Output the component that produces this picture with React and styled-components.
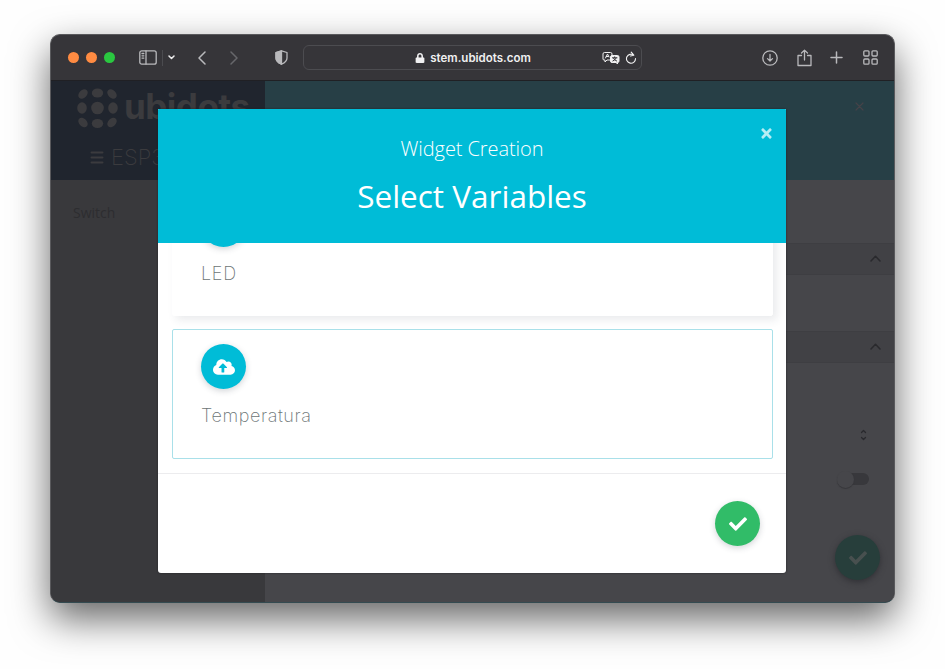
import React from "react";
import styled, { createGlobalStyle } from "styled-components";
import { FaCheck, FaTimes, FaCloudUploadAlt, FaLock } from "react-icons/fa";

const GlobalStyle = createGlobalStyle`
  * { box-sizing: border-box; }
  body { margin: 0; background: #fefefe; font-family: "Open Sans", sans-serif; overflow: hidden; }
  svg { display: block; flex: none; }
`;

const Desktop = styled.div`
  height: 669px;
  padding: 34px 50px 0;
`;

const Browser = styled.main`
  width: 845px;
  height: 569px;
  display: flex;
  flex-direction: column;
  border: 1px solid #59595c;
  border-bottom-color: #344b51;
  border-radius: 10px;
  overflow: hidden;
  background: #363539;
  box-shadow: 0 16px 38px rgba(0, 0, 0, 0.6);
`;

const Toolbar = styled.header`
  height: 46px;
  flex: none;
  display: grid;
  grid-template-columns: 252px 339px 1fr;
  align-items: center;
  border-bottom: 1px solid #202024;
  color: #b9b9bc;
`;

const ToolGroup = styled.div`
  display: flex;
  align-items: center;
`;

const Lights = styled.div`
  display: flex;
  gap: 7px;
  margin-left: 17px;
`;

const Light = styled.span`
  width: 11px;
  height: 11px;
  border-radius: 50%;
  background: ${(p) => p.$color};
`;

const Tool = styled.span`
  margin-left: ${(p) => p.$gap}px;
  color: ${(p) => p.$color || "inherit"};
`;

const Divider = styled.span`
  width: 1px;
  height: 16px;
  margin-left: 5px;
  background: #4b4b4f;
`;

const AddressBar = styled.div`
  height: 25px;
  display: grid;
  grid-template-columns: 1fr auto 1fr;
  align-items: center;
  border: 1px solid #4c4c50;
  border-radius: 6px;
  color: #f0f0f1;
`;

const Address = styled.div`
  grid-column: 2;
  display: flex;
  align-items: center;
  gap: 5px;
  padding: 1px 0 0 1px;
  font: 600 11.5px/16px Inter, sans-serif;
`;

const AddressTools = styled.div`
  display: flex;
  justify-content: flex-end;
  align-items: center;
  gap: 5px;
  padding-right: 4px;
`;

const Page = styled.div`
  position: relative;
  flex: 1;
  display: grid;
  grid-template-columns: 214px 1fr;
`;

const Sidebar = styled.aside`
  background: #39393c;
`;

const SidebarHead = styled.div`
  height: 99px;
  padding: 7px 0 0 26px;
  background: #20252e;
  color: #3b3b3e;
`;

const Brand = styled.div`
  height: 42px;
  display: flex;
  align-items: flex-start;
  gap: 6px;
  font: 700 35px/36px Inter, sans-serif;
  letter-spacing: -0.5px;
`;

const DeviceTitle = styled.div`
  display: flex;
  align-items: center;
  gap: 7px;
  margin: 14px 0 0 13px;
  font: 200 22px/27px Inter, sans-serif;
`;

const WidgetName = styled.div`
  padding: 23px 0 0 22px;
  font: 400 14px/20px "Open Sans", sans-serif;
  color: #2d2d30;
`;

const Panel = styled.section`
  display: flex;
  flex-direction: column;
  background: #46464a;
  color: #29292d;
`;

const PanelHead = styled.div`
  height: 99px;
  flex: none;
  display: flex;
  justify-content: flex-end;
  padding: 21px 30px 0 0;
  background: #273f46;
  color: #454248;
`;

const Section = styled.div`
  height: 32px;
  flex: none;
  display: flex;
  align-items: center;
  justify-content: flex-end;
  margin-top: ${(p) => p.$top}px;
  padding: 0 13px 2px 0;
  border: 1px solid #3e3e42;
  border-right: 0;
  background: #414145;
`;

const FieldEnd = styled.div`
  display: flex;
  justify-content: flex-end;
  margin-top: ${(p) => p.$top}px;
  padding-right: ${(p) => p.$right}px;
`;

const SwitchTrack = styled.span`
  width: 32px;
  height: 16px;
  display: flex;
  align-items: center;
`;

const SwitchKnob = styled.span`
  width: 17px;
  height: 17px;
  flex: none;
  border-radius: 50%;
  background: #46464a;
  box-shadow: 0 1px 1px #36363a;
  z-index: 1;
`;

const SwitchBar = styled.span`
  width: 24px;
  height: 12px;
  margin-left: -9px;
  border-radius: 6px;
  background: #38383c;
`;

const RoundButton = styled.button`
  width: 45px;
  height: 45px;
  display: flex;
  flex: none;
  align-items: center;
  justify-content: center;
  padding: 0;
  border: 0;
  border-radius: 50%;
  background: ${(p) => p.$bg};
  color: ${(p) => p.$fg || "#fff"};
  box-shadow: 0 2px 6px ${(p) => p.$shadow || "rgba(50, 60, 75, 0.22)"};
`;

const Overlay = styled.div`
  position: absolute;
  inset: 0;
  z-index: 2;
  padding: 28px 0 0 107px;
`;

const Dialog = styled.section`
  width: 628px;
  height: 464px;
  display: flex;
  flex-direction: column;
  border-radius: 1px 1px 3px 3px;
  overflow: hidden;
  background: #fff;
  box-shadow: 0 0 2px #202024;
`;

const DialogHead = styled.header`
  height: 134px;
  flex: none;
  display: grid;
  grid-template-columns: 40px 1fr 40px;
  background: #00bcd7;
  color: #fff;
  text-align: center;
`;

const Titles = styled.div`
  grid-column: 2;
  padding-top: 26px;
`;

const Kicker = styled.div`
  font: 300 20px/28px "Open Sans", sans-serif;
  letter-spacing: -0.08px;
`;

const Heading = styled.h1`
  margin: 11px 0 0;
  font: 400 31.5px/44px "Open Sans", sans-serif;
`;

const Close = styled.div`
  padding: 17px 0 0 13px;
  color: #b5edf4;
`;

const VariableList = styled.div`
  height: 231px;
  flex: none;
  display: flex;
  flex-direction: column;
  justify-content: flex-end;
  gap: 13px;
  padding: 0 13px 14px 14px;
  overflow: hidden;
  border-bottom: 1px solid #ececee;
`;

const VariableCard = styled.article`
  height: 130px;
  flex: none;
  padding: ${(p) => (p.$selected ? 14 : 15)}px 28px;
  background: #fff;
  border: 1px solid ${(p) => (p.$selected ? "#a9e0e9" : "#fff")};
  border-radius: 2px;
  box-shadow: ${(p) => (p.$selected ? "none" : "4px 4px 9px rgba(50, 60, 75, 0.1)")};
`;

const VariableName = styled.div`
  margin-top: 15px;
  font: 200 18px/24px Inter, sans-serif;
  letter-spacing: ${(p) => p.$tracking}px;
  color: #6c7476;
`;

const DialogFoot = styled.footer`
  flex: 1;
  display: flex;
  justify-content: flex-end;
  padding: 27px 26px 0 0;
`;

const LineIcon = ({ w, h = w, stroke = 1.3, children }) => (
  <svg width={w} height={h} viewBox={`0 0 ${w} ${h}`} fill="none" stroke="currentColor" strokeWidth={stroke} strokeLinecap="round" strokeLinejoin="round">
    {children}
  </svg>
);

const LogoMark = () => (
  <svg width="41" height="41" viewBox="0 0 41 41" fill="currentColor">
    <ellipse cx="6" cy="6" rx="5.4" ry="3.9" transform="rotate(-45 6 6)" />
    <ellipse cx="20.5" cy="5" rx="5.7" ry="4.6" />
    <ellipse cx="35" cy="6" rx="5.4" ry="3.9" transform="rotate(45 35 6)" />
    <ellipse cx="5" cy="20" rx="4.8" ry="5.7" />
    <circle cx="20.5" cy="20" r="6.3" />
    <ellipse cx="36" cy="20" rx="4.8" ry="5.7" />
    <ellipse cx="6" cy="34.5" rx="5.4" ry="3.9" transform="rotate(45 6 34.5)" />
    <ellipse cx="20.5" cy="35.5" rx="5.7" ry="4.6" />
    <ellipse cx="35" cy="34.5" rx="5.4" ry="3.9" transform="rotate(-45 35 34.5)" />
  </svg>
);

const ShieldIcon = () => (
  <LineIcon w={13} h={15}>
    <path d="M6.5.8 12 2.5V8c0 3-2.6 4.9-5.5 6.2C3.6 12.9 1 11 1 8V2.5Z" />
    <path d="M6.5.8V14.2C3.6 12.9 1 11 1 8V2.5Z" fill="currentColor" />
  </LineIcon>
);

const TranslateIcon = () => (
  <LineIcon w={18} h={14} stroke={1}>
    <path d="M8 9H5l-2 2V9H2Q1 9 1 8V3q0-1.500 1.500-1.500h6Q10 1.500 10 3v1" />
    <path d="m3.500 7 2-4 1.500 3M4.300 5.500h2" />
    <path d="M10 4.500h5.500q1.500 0 1.500 1.500v4q0 1.500-1.500 1.500V13L14 11.500h-4q-1.500 0-1.500-1.500V6q0-1.500 1.500-1.500Z" fill="currentColor" />
    <path d="M10.500 6.800h4.500M12.700 5.800v1M14.200 7q-.8 2-3.300 3M11.300 7q.8 2 3.300 3" stroke="#363539" />
  </LineIcon>
);

const CaretUp = () => (
  <LineIcon w={11} h={7} stroke={1.5}><path d="m1 6 4.5-4.8L10 6" /></LineIcon>
);

const BrowserToolbar = () => (
  <Toolbar>
    <ToolGroup>
      <Lights>
        <Light $color="#ff8b42" />
        <Light $color="#ff8b42" />
        <Light $color="#2ac740" />
      </Lights>
      <Tool $gap={24}>
        <LineIcon w={18} h={15}>
          <rect x=".8" y=".8" width="16.4" height="13.4" rx="2" />
          <path d="M7 1v13M3 3.5h1.8M3 5.8h1.8M3 8.1h1.8" />
        </LineIcon>
      </Tool>
      <Divider />
      <Tool $gap={5} $color="#eee"><LineIcon w={7} h={5} stroke={1.5}><path d="m1 1 2.5 2.500L6 1" /></LineIcon></Tool>
      <Tool $gap={23}><LineIcon w={8} h={14} stroke={1.5}><path d="M7 1 1 7l6 6" /></LineIcon></Tool>
      <Tool $gap={24} $color="#67676b"><LineIcon w={8} h={14} stroke={1.5}><path d="m1 1 6 6-6 6" /></LineIcon></Tool>
      <Tool $gap={37}><ShieldIcon /></Tool>
    </ToolGroup>
    <AddressBar>
      <Address><FaLock size={10} />stem.ubidots.com</Address>
      <AddressTools>
        <TranslateIcon />
        <LineIcon w={12} h={13} stroke={1.1}><path d="M8.800 4.200A4.500 4.500 0 1 0 10.500 7.500M6.200 1.200 8.800 4.200 5.500 5" /></LineIcon>
      </AddressTools>
    </AddressBar>
    <ToolGroup>
      <Tool $gap={120}>
        <LineIcon w={16}><circle cx="8" cy="8" r="7.2" /><path d="M8 4.500v6.500M5.500 8.600 8 11l2.500-2.400" /></LineIcon>
      </Tool>
      <Tool $gap={19}>
        <LineIcon w={15} h={18}><path d="M4.500 6.500H1v10h13v-10h-3.500M7.500 11V1.200M4.500 4l3-2.900 3 2.900" /></LineIcon>
      </Tool>
      <Tool $gap={18}><LineIcon w={13} stroke={1.5}><path d="M6.500 1v11M1 6.500h11" /></LineIcon></Tool>
      <Tool $gap={20}>
        <LineIcon w={15}>
          <rect x=".8" y=".8" width="5.2" height="5.2" rx="1" />
          <rect x="9" y=".8" width="5.2" height="5.2" rx="1" />
          <rect x=".8" y="9" width="5.2" height="5.2" rx="1" />
          <rect x="9" y="9" width="5.2" height="5.2" rx="1" />
        </LineIcon>
      </Tool>
    </ToolGroup>
  </Toolbar>
);

const Variable = ({ name, selected, tracking }) => (
  <VariableCard $selected={selected}>
    <RoundButton as="div" $bg="#00bcd7"><FaCloudUploadAlt size={22} /></RoundButton>
    <VariableName $tracking={tracking}>{name}</VariableName>
  </VariableCard>
);

export default function App() {
  return (
    <Desktop>
      <GlobalStyle />
      <Browser>
        <BrowserToolbar />
        <Page>
          <Sidebar>
            <SidebarHead>
              <Brand><LogoMark />ubidots</Brand>
              <DeviceTitle>
                <LineIcon w={14} h={13} stroke={2}><path d="M1.500 1.500h11M1.500 6.500h11M1.500 11.500h11" /></LineIcon>
                ESP32
              </DeviceTitle>
            </SidebarHead>
            <WidgetName>Switch</WidgetName>
          </Sidebar>
          <Panel>
            <PanelHead><LineIcon w={9} stroke={1.2}><path d="m1 1 7 7M8 1 1 8" /></LineIcon></PanelHead>
            <Section $top={63}><CaretUp /></Section>
            <Section $top={56}><CaretUp /></Section>
            <FieldEnd $top={66} $right={27}>
              <LineIcon w={7} h={12} stroke={1.3}><path d="m1.500 3.500 2-2 2 2M1.500 8.500l2 2 2-2" /></LineIcon>
            </FieldEnd>
            <FieldEnd $top={30} $right={25}><SwitchTrack><SwitchKnob /><SwitchBar /></SwitchTrack></FieldEnd>
            <FieldEnd $top={48} $right={14}>
              <RoundButton $bg="#273e3b" $fg="#48504f" $shadow="#303035"><FaCheck size={18} /></RoundButton>
            </FieldEnd>
          </Panel>
          <Overlay>
            <Dialog>
              <DialogHead>
                <Titles>
                  <Kicker>Widget Creation</Kicker>
                  <Heading>Select Variables</Heading>
                </Titles>
                <Close><FaTimes size={15} /></Close>
              </DialogHead>
              <VariableList>
                <Variable name="LED" tracking={0.7} />
                <Variable name="Temperatura" tracking={0.6} selected />
              </VariableList>
              <DialogFoot>
                <RoundButton $bg="#31bc68"><FaCheck size={18} /></RoundButton>
              </DialogFoot>
            </Dialog>
          </Overlay>
        </Page>
      </Browser>
    </Desktop>
  );
}
